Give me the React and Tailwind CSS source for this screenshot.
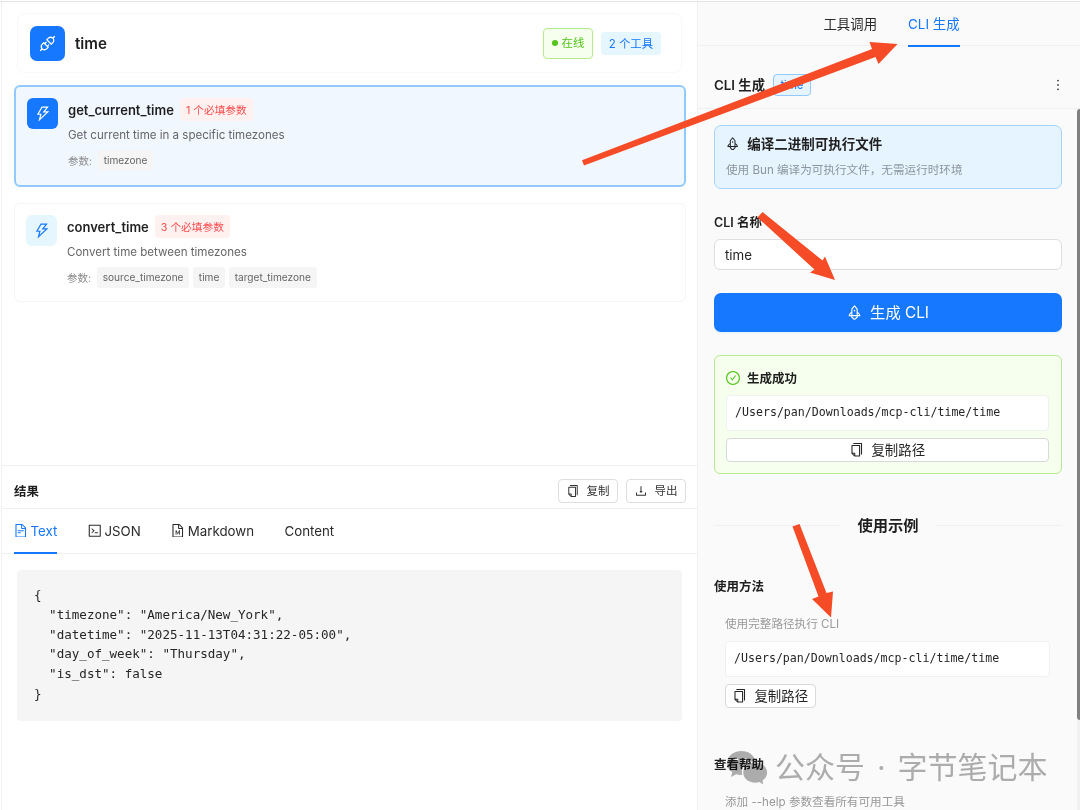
import React from 'react';
import {
  AiOutlineApi,
  AiOutlineThunderbolt,
  AiOutlineRocket,
  AiOutlineCheckCircle,
  AiOutlineCopy,
  AiOutlineDownload,
  AiOutlineFileText,
  AiOutlineCode,
  AiOutlineFileMarkdown,
  AiOutlineMore,
} from 'react-icons/ai';

const tools = [
  {
    name: 'get_current_time',
    required: '1 个必填参数',
    description: 'Get current time in a specific timezones',
    params: ['timezone'],
    active: true,
  },
  {
    name: 'convert_time',
    required: '3 个必填参数',
    description: 'Convert time between timezones',
    params: ['source_timezone', 'time', 'target_timezone'],
    active: false,
  },
];

const result = `{
  "timezone": "America/New_York",
  "datetime": "2025-11-13T04:31:22-05:00",
  "day_of_week": "Thursday",
  "is_dst": false
}`;

const cliPath = '/Users/pan/Downloads/mcp-cli/time/time';

// The glyphs are drawn on a 1024 grid with a 64 unit margin; trim the margin.
function Icon({ as: Glyph, size, className }) {
  return <Glyph viewBox="64 64 896 896" size={size} className={className} />;
}

function ToolCard({ tool }) {
  return (
    <div
      className={
        tool.active
          ? 'flex h-[102px] rounded-[6px] border-2 border-[#91caff] bg-[#f0f7ff] pl-[11px] pt-[11px]'
          : 'mt-4 flex h-[99px] rounded-[6px] border border-[#f5f5f5] bg-white pl-[11px] pt-[11px]'
      }
    >
      <div
        className={
          tool.active
            ? 'flex size-[31px] shrink-0 items-center justify-center rounded-[6px] bg-[#1677ff] text-white'
            : 'flex size-[31px] shrink-0 items-center justify-center rounded-[6px] bg-[#e6f6ff] text-[#1677ff]'
        }
      >
        <Icon as={AiOutlineThunderbolt} size={16} />
      </div>
      <div className="ml-[10px]">
        <div className="flex h-[23px] items-center gap-[6px]">
          <span className="pt-[3px] text-[13px] font-semibold text-[#1f1f1f]">{tool.name}</span>
          <span className="flex h-[23px] items-center rounded-[4px] bg-[#fff1f0] px-[6px] pt-[4px] text-[10.7px] text-[#ff4d4f]">
            {tool.required}
          </span>
        </div>
        <p className="mt-[5px] h-[18px] text-[11.55px] leading-[18px] text-[#666]">{tool.description}</p>
        <div className="mt-[6px] flex h-[21px] items-center gap-[4px]">
          <span className="mr-[2px] pt-[2px] text-[10.5px] text-[#8c8c8c]">参数:</span>
          {tool.params.map((p) => (
            <span key={p} className="flex h-[21px] items-center rounded-[3px] bg-[#f5f5f5] px-[5.7px] pt-px text-[10.08px] text-[#666]">
              {p}
            </span>
          ))}
        </div>
      </div>
    </div>
  );
}

function SmallButton({ icon, children }) {
  return (
    <button className="flex h-[24px] w-[60px] items-center justify-center gap-[8px] rounded-[4px] border border-[#dedede] bg-white text-[11.5px] text-[#333]">
      {icon}
      <span className="pt-[2px]">{children}</span>
    </button>
  );
}

function ResultTab({ icon, label, active }) {
  return (
    <div
      className={
        active
          ? 'flex h-[45px] items-center gap-[3px] border-b-2 border-[#1677ff] text-[#1677ff]'
          : 'flex h-[45px] items-center gap-[3px] border-b-2 border-transparent text-[#2b2b2b]'
      }
    >
      {icon}
      <span className="pt-[3px] text-[13.3px]">{label}</span>
    </div>
  );
}

function LeftPane() {
  return (
    <main className="flex w-[697px] shrink-0 flex-col border-l border-r border-[#f0f0f0] bg-white">
      <section className="h-[463px] shrink-0 pl-[12px] pr-[11px] pt-[11px]">
        <div className="ml-[3px] mr-[4px] flex h-[60px] items-center rounded-[8px] border border-[#f8f8f8] pl-[12px] pr-[20px]">
          <div className="flex size-[35px] items-center justify-center rounded-[7px] bg-[#1677ff] text-white">
            <Icon as={AiOutlineApi} size={17} />
          </div>
          <h1 className="ml-[10px] grow pt-[2px] text-[15.2px] font-semibold text-[#1f1f1f]">time</h1>
          <span className="flex h-[31px] w-[50px] items-center justify-center gap-[4px] rounded-[4px] border border-[#b7eb8f] bg-[#f6ffed] text-[11.4px] text-[#52c41a]">
            <i className="size-[6px] rounded-full bg-[#52c41a]" />
            <span className="pt-[2px]">在线</span>
          </span>
          <span className="ml-[8px] flex h-[23px] w-[60px] items-center justify-center rounded-[4px] bg-[#e6f6ff] pt-[3px] text-[11.4px] text-[#1677ff]">
            2 个工具
          </span>
        </div>
        <div className="mt-[12px]">
          {tools.map((t) => (
            <ToolCard key={t.name} tool={t} />
          ))}
        </div>
      </section>

      <section className="grow border-t border-[#f0f0f0]">
        <div className="flex h-[43px] items-center border-b border-[#f0f0f0] pl-[12px] pr-[11px] pt-[8px]">
          <h2 className="grow pt-[2px] text-[12.4px] font-semibold text-[#1f1f1f]">结果</h2>
          <div className="flex gap-[8px]">
            <SmallButton icon={<Icon as={AiOutlineCopy} size={12} />}>复制</SmallButton>
            <SmallButton icon={<Icon as={AiOutlineDownload} size={12} />}>导出</SmallButton>
          </div>
        </div>
        <div className="flex h-[45px] gap-[30.5px] border-b border-[#f0f0f0] pl-[12px]">
          <ResultTab active icon={<Icon as={AiOutlineFileText} size={13.5} />} label="Text" />
          <ResultTab icon={<Icon as={AiOutlineCode} size={13.5} />} label="JSON" />
          <ResultTab icon={<Icon as={AiOutlineFileMarkdown} size={13.5} />} label="Markdown" />
          <ResultTab label="Content" />
        </div>
        <pre className="ml-[15px] mr-[15px] mt-[16px] h-[151px] rounded-[4px] bg-[#f5f5f5] pl-[17px] pt-[15px] font-['DejaVu_Sans_Mono',monospace] text-[12.55px] leading-[19.75px] text-[#262626]">
          {result}
        </pre>
      </section>
    </main>
  );
}

function PathBox() {
  return (
    <div className="flex h-[36px] items-center rounded-[4px] border border-[#f0f0f0] bg-white pl-[8px] font-['DejaVu_Sans_Mono',monospace] text-[11.6px] text-[#262626]">
      {cliPath}
    </div>
  );
}

function RightPane() {
  return (
    <aside className="flex min-w-0 grow flex-col overflow-hidden bg-[#fafafa]">
      <nav className="flex h-[44px] shrink-0 justify-center gap-[31px] border-b border-[#f0f0f0] pl-[5px] text-[13.4px]">
        <span className="flex h-[45px] items-center border-b-2 border-transparent pt-[2px] text-[#2b2b2b]">工具调用</span>
        <span className="flex h-[45px] items-center border-b-2 border-[#1677ff] pt-[2px] text-[#1677ff]">CLI 生成</span>
      </nav>
      <header className="flex h-[63px] shrink-0 items-center border-b border-[#f0f0f0] pl-[16px] pr-[14px] pt-[15px]">
        <h2 className="pt-[2px] text-[13.3px] font-semibold text-[#1f1f1f]">CLI 生成</h2>
        <span className="ml-[8px] flex h-[22px] w-[38px] items-center justify-center rounded-[4px] border border-[#91caff] bg-[#e6f4ff] pt-[2px] text-[11.4px] text-[#1677ff]">
          time
        </span>
        <AiOutlineMore className="ml-auto text-[#333]" size={16} />
      </header>
      <div className="flex min-h-0 grow">
        <div className="flex w-[379px] shrink-0 flex-col pl-[16px] pr-[15px] pt-[16px]">
          <div className="h-[64px] shrink-0 rounded-[7px] border border-[#a5d5ff] bg-[#e6f4ff] pl-[12px] pt-[8px]">
            <div className="flex h-[20px] items-center gap-[8px] text-[#1f1f1f]">
              <Icon as={AiOutlineRocket} size={13.3} className="-ml-px" />
              <span className="text-[13.5px] font-semibold">编译二进制可执行文件</span>
            </div>
            <p className="-ml-px mt-[7px] text-[11.6px] leading-[18px] text-[#8c959d]">使用 Bun 编译为可执行文件，无需运行时环境</p>
          </div>

          <label className="mt-[25px] h-[18px] shrink-0 text-[12.5px] font-semibold leading-[18px] text-[#1f1f1f]">CLI 名称</label>
          <div className="mt-[7px] flex h-[31px] shrink-0 items-center rounded-[6px] border border-[#dedede] bg-white pl-[10px] pt-[2px] text-[13.3px] text-[#262626]">
            time
          </div>
          <button className="mt-[23px] flex h-[39px] shrink-0 items-center justify-center gap-[8px] rounded-[7px] bg-[#1677ff] text-[15.3px] text-white shadow-[0_2px_0_rgba(5,145,255,0.06)]">
            <Icon as={AiOutlineRocket} size={15} />
            <span className="pt-[2px]">生成 CLI</span>
          </button>

          <div className="mt-[23px] h-[119px] shrink-0 rounded-[6px] border border-[#b7eb8f] bg-[#f6ffed] pl-[11px] pr-[12px] pt-[12px]">
            <div className="mb-[8px] flex h-[19px] items-center gap-[7px]">
              <Icon as={AiOutlineCheckCircle} className="text-[#52c41a]" size={14} />
              <span className="pt-[3px] text-[12.5px] font-semibold text-[#1f1f1f]">生成成功</span>
            </div>
            <PathBox />
            <button className="mt-[7px] flex h-[24px] w-full items-center justify-center gap-[8px] rounded-[4px] border border-[#d9d9d9] bg-white text-[13.4px] text-[#262626]">
              <Icon as={AiOutlineCopy} size={13.5} />
              复制路径
            </button>
          </div>

          <div className="mt-[39px] flex h-[24px] shrink-0 items-center gap-[16px]">
            <i className="h-px grow bg-[#f0f0f0]" />
            <h3 className="pt-[2px] text-[15.3px] font-semibold text-[#1f1f1f]">使用示例</h3>
            <i className="h-px grow bg-[#f0f0f0]" />
          </div>

          <h4 className="mt-[41px] h-[18px] shrink-0 text-[12.5px] font-semibold leading-[18px] text-[#1f1f1f]">使用方法</h4>
          <div className="mt-[19px] shrink-0 pl-[11px] pr-[12px]">
            <p className="h-[18px] text-[11.6px] leading-[18px] text-[#999]">使用完整路径执行 CLI</p>
            <div className="mt-[8px]">
              <PathBox />
            </div>
            <button className="mt-[7px] flex h-[24px] w-[91px] items-center justify-center gap-[8px] rounded-[4px] border border-[#d9d9d9] bg-white text-[13.4px] text-[#262626]">
              <Icon as={AiOutlineCopy} size={13.5} />
              复制路径
            </button>
          </div>

          <h4 className="mt-[48px] h-[18px] shrink-0 text-[12.5px] font-semibold leading-[18px] text-[#1f1f1f]">查看帮助</h4>
          <p className="mt-[19px] h-[18px] shrink-0 pl-[11px] text-[11.6px] leading-[18px] text-[#999]">添加 --help 参数查看所有可用工具</p>
        </div>
        <div className="w-[3px] bg-[#f1f1f1]">
          <div className="h-[611px] w-[6px] rounded-[3px] bg-[#808080]" />
        </div>
      </div>
    </aside>
  );
}

function Watermark() {
  return (
    <div className="absolute left-[726px] top-[744px] flex h-[46px] items-center text-[#b0b0b0] mix-blend-multiply">
      <svg width="42" height="36" viewBox="0 0 42 36" fill="currentColor">
        <path
          fillRule="evenodd"
          d="M15.5 2C7.5 2 1 7.3 1 14c0 3.700 2 7 5.300 9.200L5 28l5.200-2.700c2 .6 4 .8 6 .7C14.500 18.500 20 12 29.500 12 28 6 22.500 2 15.500 2zM10.500 9a1.800 1.800 0 1 1 0 3.600 1.800 1.800 0 0 1 0-3.600zM20 9a1.800 1.800 0 1 1 0 3.600A1.800 1.800 0 0 1 20 9z"
        />
        <path d="M29.200 13.500c-6.700 0-12 4.500-12 10.100s5.300 10.100 12 10.100c1.400 0 2.800-.2 4-.6l4.200 2.300-1-3.800c2.900-1.900 4.700-4.700 4.700-8 0-5.600-5.300-10.100-11.900-10.100z" />
      </svg>
      <span className="ml-[7px] whitespace-pre text-[30px] [word-spacing:3.5px]">公众号 · 字节笔记本</span>
    </div>
  );
}

function Arrows() {
  return (
    <svg className="pointer-events-none absolute left-0 top-0" width="1080" height="810" viewBox="0 0 1080 810" fill="#f54b26">
      <polygon points="582,160.300 872,49 869.500,42 897.500,44 878.500,64 875.500,57 584,165.500" />
      <polygon points="762.500,212 822.500,260.500 825,256.500 835,280 810,272.500 814.500,269.500 757.500,217.500" />
      <polygon points="799.500,524 826.500,593 833,591.500 831,617.500 812,599 818.500,596.500 792.500,526.500" />
    </svg>
  );
}

export default function App() {
  return (
    <div className="relative flex h-[810px] w-[1080px] flex-col overflow-hidden whitespace-nowrap bg-white font-[Inter,'Noto_Sans_CJK_SC',sans-serif]">
      <div className="h-[2px] shrink-0 border-b border-[#e4e4e4]" />
      <div className="flex min-h-0 grow">
        <div className="w-px shrink-0 bg-white" />
        <LeftPane />
        <RightPane />
      </div>
      <Watermark />
      <Arrows />
    </div>
  );
}
